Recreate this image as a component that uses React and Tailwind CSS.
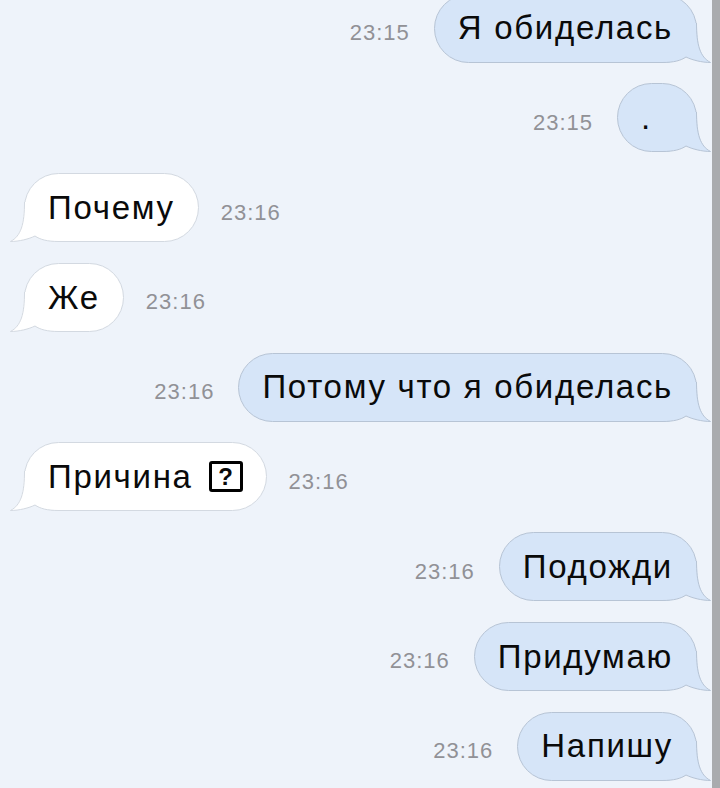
const messages = [
  { out: true, text: 'Я обиделась', time: '23:15' },
  { out: true, text: '.', time: '23:15', dot: true },
  { out: false, text: 'Почему', time: '23:16' },
  { out: false, text: 'Же', time: '23:16' },
  { out: true, text: 'Потому что я обиделась', time: '23:16' },
  { out: false, text: 'Причина', time: '23:16', unknown: true },
  { out: true, text: 'Подожди', time: '23:16' },
  { out: true, text: 'Придумаю', time: '23:16' },
  { out: true, text: 'Напишу', time: '23:16' },
];

function Tail({ out }) {
  const fill = out ? '#d6e5f8' : '#ffffff';
  const stroke = out ? '#b7c4d5' : '#d3d9e1';
  return (
    <svg
      viewBox="0 0 49 40"
      className={
        out
          ? 'absolute bottom-[-1px] right-[-15px] h-[40px] w-[49px]'
          : 'absolute bottom-[-1px] left-[-15px] h-[40px] w-[49px] -scale-x-100'
      }
    >
      <path
        d="M34 0 L35 0 C35 22 38.5 34 48.5 39.5 C40 39.5 30 37 24 34 C19 37.5 12 39.5 0 39.5 L0 0 Z"
        fill={fill}
      />
      <path
        d="M34.5 0 C34.5 22 38 34 48.5 39.5 C40 39.5 30 37 24 34 C19 37.5 12 39.5 0 39.5"
        fill="none"
        stroke={stroke}
        strokeWidth="1"
      />
    </svg>
  );
}

function Time({ children }) {
  return (
    <span className="mt-[9px] text-[22px] tracking-[1px] text-[#919196]">{children}</span>
  );
}

function Bubble({ msg }) {
  return (
    <div
      className={
        msg.out
          ? 'relative flex h-[69px] items-center rounded-full border border-[#b7c4d5] bg-[#d6e5f8] px-[23px]'
          : 'relative flex h-[69px] items-center rounded-full border border-[#d3d9e1] bg-white px-[23px]'
      }
      style={msg.dot ? { width: 80 } : undefined}
    >
      <Tail out={msg.out} />
      <span className="relative z-10 flex items-center text-[33px] tracking-[1.7px] text-[#0a0a0a]">
        {msg.text}
        {msg.unknown && (
          <span className="ml-[16px] inline-flex h-[31px] w-[34px] items-center justify-center rounded-[3px] border-[3px] border-black text-[24px] font-bold leading-none tracking-normal">
            ?
          </span>
        )}
      </span>
    </div>
  );
}

export default function App() {
  return (
    <div className="flex h-[788px] w-[720px] overflow-hidden bg-[#eef3fa] font-['Liberation_Sans',Arial,sans-serif]">
      <div className="-mt-[6.5px] flex flex-1 flex-col gap-[20.75px]">
        {messages.map((msg, i) =>
          msg.out ? (
            <div key={i} className="flex items-center justify-end gap-[24px] pr-[15px]">
              <Time>{msg.time}</Time>
              <Bubble msg={msg} />
            </div>
          ) : (
            <div key={i} className="flex items-center gap-[22px] pl-[24px]">
              <Bubble msg={msg} />
              <Time>{msg.time}</Time>
            </div>
          )
        )}
      </div>
      <div className="w-[8px] bg-[#a9abae]" />
    </div>
  );
}
